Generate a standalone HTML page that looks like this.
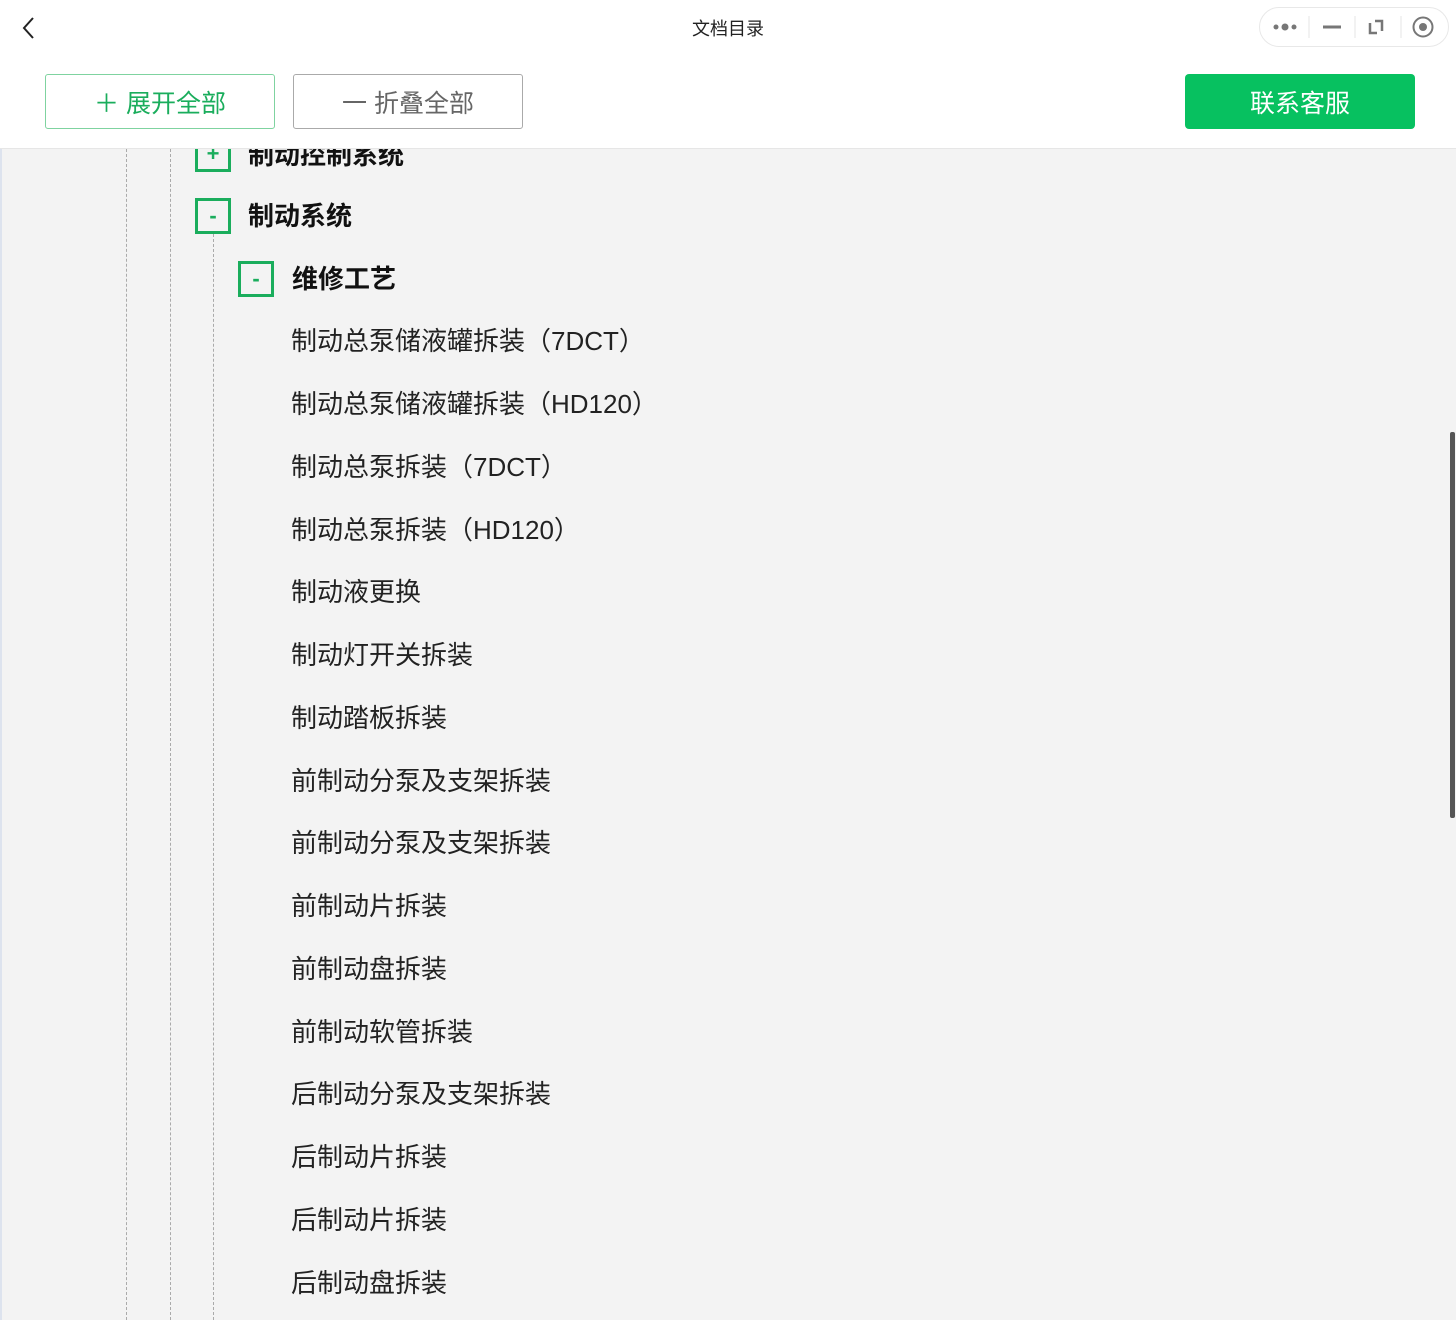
<!DOCTYPE html>
<html><head><meta charset="utf-8"><style>
*{margin:0;padding:0;box-sizing:border-box}
body{width:1456px;height:1320px;overflow:hidden;background:#f3f3f3;font-family:"Liberation Sans","Noto Sans CJK SC",sans-serif;position:relative;color:#222}
.hdr{position:absolute;left:0;top:0;width:1456px;height:149px;background:#fff;border-bottom:1px solid #e6e6e6;z-index:5}
.title{position:absolute;top:15px;width:100%;text-align:center;font-size:18px;color:#222}
.btn{position:absolute;top:74px;height:55px;border-radius:3px;font-size:25px;display:flex;align-items:center;justify-content:center}
.dl{position:absolute;top:149px;bottom:0;border-left:1px dashed #aaa}
.box{position:absolute;width:36px;height:36px;border:3px solid #1aad5c;color:#1aad5c;font-size:22px;font-weight:bold;display:flex;align-items:center;justify-content:center;line-height:1}
.b{position:absolute;font-size:26px;font-weight:bold;color:#111;line-height:36px}
.it{position:absolute;left:291px;font-size:26px;color:#222;line-height:36px}
</style></head><body>
<div class="hdr">
<svg style="position:absolute;left:20px;top:16px" width="20" height="24"><path d="M13 2 L4 12 L13 22" stroke="#222" stroke-width="2" fill="none"/></svg>
<div class="title">文档目录</div>
<div style="position:absolute;left:1259px;top:7px;width:190px;height:40px;border:1px solid #e8e8e8;border-radius:20px;background:#fff">
<svg width="190" height="40" style="position:absolute;left:-1px;top:-1px">
<circle cx="17" cy="20" r="2.5" fill="#777"/><circle cx="26" cy="20" r="3.5" fill="#777"/><circle cx="35" cy="20" r="2.5" fill="#777"/>
<line x1="50" y1="9" x2="50" y2="31" stroke="#e5e5e5"/>
<line x1="64" y1="20" x2="82" y2="20" stroke="#777" stroke-width="3"/>
<line x1="96" y1="9" x2="96" y2="31" stroke="#e5e5e5"/>
<path d="M111 16 V26 H118 M123 24 V14 H116" stroke="#777" stroke-width="2.5" fill="none"/>
<line x1="142" y1="9" x2="142" y2="31" stroke="#e5e5e5"/>
<circle cx="164" cy="20" r="9.5" stroke="#777" stroke-width="2" fill="none"/><circle cx="164" cy="20" r="4" fill="#777"/>
</svg></div>
<div class="btn" style="left:45px;width:230px;border:1px solid #7fd3a0;color:#1aad5c">＋ 展开全部</div>
<div class="btn" style="left:293px;width:230px;border:1px solid #aaa;color:#666">一 折叠全部</div>
<div class="btn" style="left:1185px;width:230px;background:#07c160;color:#fff;border-radius:4px">联系客服</div>
</div>
<div class="dl" style="left:126px"></div>
<div class="dl" style="left:170px"></div>
<div class="dl" style="left:213px;top:234px"></div>
<div style="position:absolute;left:1450px;top:432px;width:5px;height:386px;background:#555;border-radius:2px"></div>
<div style="position:absolute;left:0;top:149px;width:2px;height:1171px;background:#dde3ee"></div>
<div class="box" style="left:195px;top:136px">+</div>
<div class="b" style="left:248px;top:137px">制动控制系统</div>
<div class="box" style="left:195px;top:198px">-</div>
<div class="b" style="left:248px;top:198px">制动系统</div>
<div class="box" style="left:238px;top:261px">-</div>
<div class="b" style="left:292px;top:261px">维修工艺</div>
<div class="it" style="top:323px">制动总泵储液罐拆装（7DCT）</div>
<div class="it" style="top:386px">制动总泵储液罐拆装（HD120）</div>
<div class="it" style="top:449px">制动总泵拆装（7DCT）</div>
<div class="it" style="top:512px">制动总泵拆装（HD120）</div>
<div class="it" style="top:574px">制动液更换</div>
<div class="it" style="top:637px">制动灯开关拆装</div>
<div class="it" style="top:700px">制动踏板拆装</div>
<div class="it" style="top:763px">前制动分泵及支架拆装</div>
<div class="it" style="top:825px">前制动分泵及支架拆装</div>
<div class="it" style="top:888px">前制动片拆装</div>
<div class="it" style="top:951px">前制动盘拆装</div>
<div class="it" style="top:1014px">前制动软管拆装</div>
<div class="it" style="top:1076px">后制动分泵及支架拆装</div>
<div class="it" style="top:1139px">后制动片拆装</div>
<div class="it" style="top:1202px">后制动片拆装</div>
<div class="it" style="top:1265px">后制动盘拆装</div>
</body></html>
